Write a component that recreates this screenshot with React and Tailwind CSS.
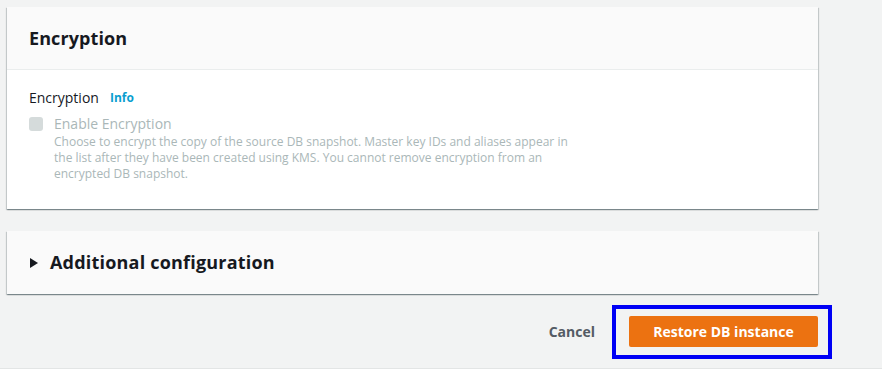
import React from 'react';

const cardShadow =
    'shadow-[0_1px_1px_0_rgba(0,28,36,0.3),1px_1px_1px_0_rgba(0,28,36,0.15),-1px_1px_1px_0_rgba(0,28,36,0.15)]';

const App = () => {
    return (
        <div className="w-[882px] h-[369px] bg-[#f2f3f3] border-b border-[#e3e5e5] pt-[7px] pl-[7px] font-['Open_Sans',sans-serif] text-[#16191f] overflow-hidden">

            {/* ── Encryption card ── */}
            <div className={`w-[811px] bg-white ${cardShadow}`}>
                <div className="h-[63px] bg-[#fafafa] border-b border-[#eaeded] px-[22px] flex items-center">
                    <h2 className="text-[18px] font-bold leading-[22px] tracking-[0.1px]">Encryption</h2>
                </div>
                <div className="px-[22px] pt-[18px] pb-[27px]">
                    <div className="flex items-center gap-[11px] h-[20px] text-[14px] leading-[20px]">
                        <span>Encryption</span>
                        <span className="text-[12px] font-bold text-[#0a9ecf]">Info</span>
                    </div>
                    <div className="mt-[6px] flex gap-[11px]">
                        <div className="w-[14px] h-[14px] mt-[3px] rounded-[3px] bg-[#d5dbdb]" />
                        <div>
                            <div className="text-[14px] leading-[20px] text-[#aab7b8]">Enable Encryption</div>
                            <p className="w-[527px] text-[12px] leading-[16px] text-[#aab7b8]">
                                Choose to encrypt the copy of the source DB snapshot. Master key IDs and aliases appear in
                                the list after they have been created using KMS. You cannot remove encryption from an
                                encrypted DB snapshot.
                            </p>
                        </div>
                    </div>
                </div>
            </div>

            {/* ── Additional configuration ── */}
            <div className={`mt-[22px] w-[811px] h-[63px] bg-[#fafafa] ${cardShadow} px-[23px] flex items-center gap-[12px]`}>
                <svg width="8" height="10" viewBox="0 0 8 10">
                    <path d="M0 0 L8 5 L0 10 Z" fill="#16191f" />
                </svg>
                <h2 className="text-[18px] font-bold leading-[22px] tracking-[0.2px] -mt-[2px]">Additional configuration</h2>
            </div>

            {/* ── Footer ── */}
            <div className="w-[811px] mt-[22px] flex items-center justify-end">
                <button className="mr-[34px] text-[14px] font-bold text-[#545b64] leading-[20px]">Cancel</button>
                <div className="relative">
                    <button className="w-[189px] h-[31px] rounded-[2px] bg-[#ec7211] text-white text-[14px] font-bold leading-[20px]">
                        Restore DB instance
                    </button>
                    <div className="absolute left-[-17px] right-[-14px] top-[-11px] bottom-[-12px] border-4 border-[#0000f5] pointer-events-none" />
                </div>
            </div>
        </div>
    );
};

export default App;
